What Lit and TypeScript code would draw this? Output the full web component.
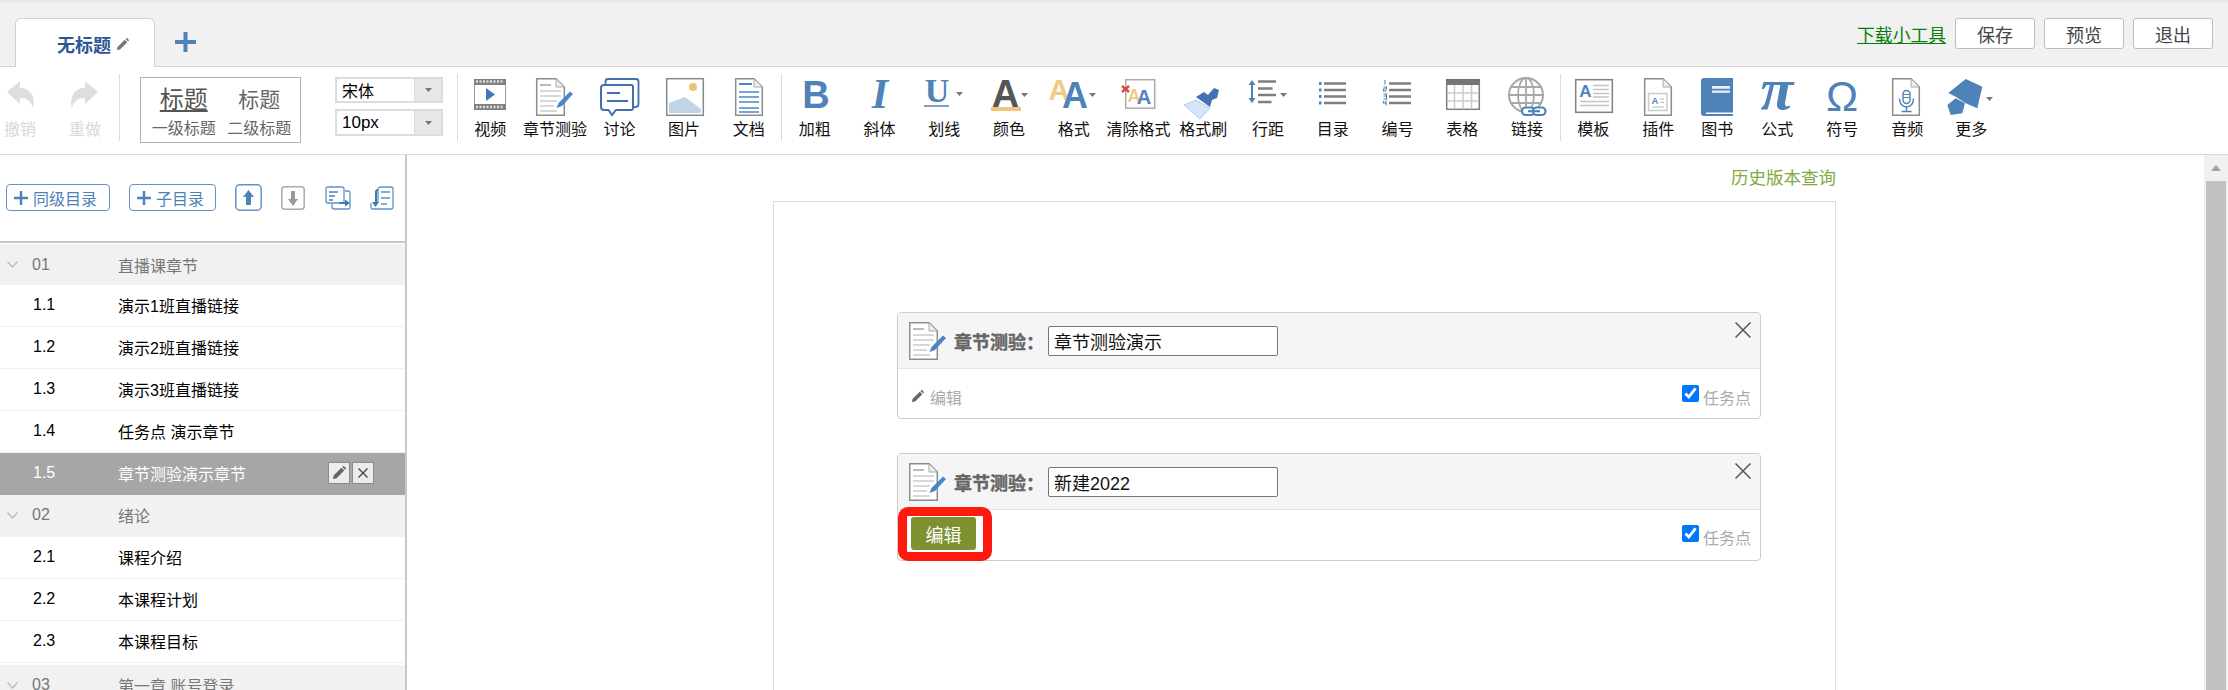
import { LitElement, html, svg, css } from "lit";
import { customElement } from "lit/decorators.js";

const ic = (body: unknown) =>
  html`<svg class="ic" viewBox="0 0 48 40" width="48" height="40">${body}</svg>`;

const caret = (x: number, y: number) =>
  svg`<path d="M${x} ${y}h7l-3.500 4Z" fill="#777"/>`;

const pencil = (w = 14, fill = "#666") =>
  html`<svg viewBox="0 0 14 14" width=${w} height=${w}><path d="M1 13 1.600 9.600 9.400 1.800 12.200 4.600 4.400 12.400ZM10.200 1 11 .3Q11.600-.1 12.200.4L13.600 1.800Q14.100 2.400 13.600 3L13 3.800Z" fill=${fill}/></svg>`;

const quizBody = svg`
  <path d="M5.700 2.700H25L33.300 11V39.300H5.700Z" fill="#fff" stroke="#8c8c8c" stroke-width="1.500"/>
  <path d="M25 3V11H33" fill="#eee" stroke="#aaa" stroke-width="1"/>
  <path d="M9 9H20" stroke="#bbb" stroke-width="2"/>
  <path d="M9 15H30M9 20H30M9 25H26M9 30H23M9 35H26" stroke="#ccc" stroke-width="1.400"/>
  <path d="M39 15.500 42 18 31 30 25.500 32 27.500 27Z" fill="#4a86c5"/>`;

const docBase = (x: number, w: number) => svg`
  <path d="M${x + 0.7} 2.700H${x + w - 9}L${x + w - 0.7} 11V39.300H${x + 0.7}Z" fill="#fff" stroke="#8c8c8c" stroke-width="1.500"/>
  <path d="M${x + w - 9} 3V11H${x + w - 1}" fill="#eee" stroke="#aaa" stroke-width="1"/>`;

const icons: Record<string, unknown> = {
  video: ic(svg`
    <rect x="8" y="3" width="32" height="31" fill="#808080"/>
    <rect x="8.800" y="9" width="30.400" height="19" fill="#fff"/>
    <path d="M10 5.500H12M13.500 5.500H15.500M17 5.500H19M20.500 5.500H22.500M24 5.500H26M27.500 5.500H29.500M31 5.500H33M34.500 5.500H36.500M10 31H12M13.500 31H15.500M17 31H19M20.500 31H22.500M24 31H26M27.500 31H29.500M31 31H33M34.500 31H36.500" stroke="#ddd" stroke-width="2.500"/>
    <path d="M20 12 29 18.500 20 25Z" fill="#3f78b5"/>`),
  quiz: ic(quizBody),
  talk: ic(svg`
    <path d="M10.500 8V5.500Q10.500 3 13 3H41Q43.500 3 43.500 5.500V28Q43.500 31 40.500 31H38.500" fill="none" stroke="#4270ad" stroke-width="1.800"/>
    <path d="M10 9H36Q38 9 38 11V32Q38 34 36 34H21L17 39 13.500 34H9Q6 34 6 31V12Q6 9 9 9Z" fill="#fff" stroke="#4270ad" stroke-width="2"/>
    <path d="M12 17H25M12 25H33" stroke="#4270ad" stroke-width="1.800"/>`),
  image: ic(svg`
    <rect x="6.700" y="2.700" width="36.600" height="36.600" fill="#fff" stroke="#888" stroke-width="1.500"/>
    <circle cx="33" cy="11" r="4" fill="#eac27a"/>
    <path d="M9 37V27L25 21 41 33V37Z" fill="#c0d3e7"/>`),
  doc: ic(svg`${docBase(10, 28)}
    <path d="M14 8H27" stroke="#4a86c5" stroke-width="2"/>
    <path d="M14 16H34M14 21H34M14 26H34M14 32H34M14 36H34" stroke="#4a86c5" stroke-width="1.500"/>`),
  bold: ic(svg`<text class="g sans b" x="25" y="32" font-size="38" text-anchor="middle">B</text>`),
  italic: ic(svg`<text class="g serif bi" x="25" y="32" font-size="42" text-anchor="middle">I</text>`),
  under: ic(svg`<text class="g serif b" x="17" y="26" font-size="34" text-anchor="middle">U</text>
    <path d="M4 30H29" stroke="#4f82b8" stroke-width="1.500"/>${caret(36, 16)}`),
  color: ic(svg`<text class="sans b dark" x="20.500" y="31" font-size="38" text-anchor="middle">A</text>
    <rect x="6" y="31" width="30" height="4" fill="#eec77e"/>${caret(36, 17)}`),
  format: ic(svg`<text class="sans b or" x="9" y="24" font-size="29" text-anchor="middle">A</text>
    <text class="g sans b" x="25" y="32" font-size="36" text-anchor="middle">A</text>${caret(39, 17)}`),
  clear: ic(svg`
    <rect x="11.700" y="3.700" width="29" height="28.500" fill="#fff" stroke="#aaa" stroke-width="1.500"/>
    <text class="sans b or" x="20" y="26" font-size="18" text-anchor="middle">A</text>
    <text class="g sans b" x="30" y="28" font-size="20" text-anchor="middle">A</text>
    <path d="M8 10 15 16M15 10 8 16" stroke="#d94a4a" stroke-width="2.400"/>`),
  brush: ic(svg`
    <path d="M5 29 17 24 31 32 21 43Z" fill="#d5e4f6" stroke="#b5cdea" stroke-width="1"/>
    <path d="M17 21 25 16 29 19 35 12 40 14 38 22 33 24 31 31Z" fill="#4470b4"/>`),
  spacing: ic(svg`
    <path d="M8 6V25" stroke="#4f82b8" stroke-width="2"/>
    <path d="M4.500 9 8 4 11.500 9ZM4.500 22 8 27 11.500 22Z" fill="#4f82b8"/>
    <path d="M14 5.500H32M14 12.500H28.500M14 19H32M14 26H27.500" stroke="#7f7f7f" stroke-width="2.400"/>${caret(36, 17)}`),
  list: ic(svg`<path d="M15 7.500H37M15 14H37M15 20.500H37M15 27H37" stroke="#7f7f7f" stroke-width="2.600"/>
    <path d="M10 6H12.500V9H10ZM10 12.500H12.500V15.500H10ZM10 19H12.500V22H10ZM10 25.500H12.500V28.500H10Z" fill="#4f82b8"/>`),
  number: ic(svg`<path d="M16 7.500H38M16 14H38M16 20.500H38M16 27H38" stroke="#7f7f7f" stroke-width="2.600"/>
    <path d="M12 4V8.500M10.500 11H13.500V13H10.500V15H13.500M10.500 18H13.500V20H10.500M13.500 20V23H10.500M10.500 25V27H13.500M13 24.500V29.500" fill="none" stroke="#4f82b8" stroke-width="1.100"/>`),
  table: ic(svg`
    <rect x="8.700" y="3.700" width="32.600" height="29.600" fill="#fff" stroke="#7f7f7f" stroke-width="1.500"/>
    <rect x="8" y="3" width="34" height="6" fill="#757575"/>
    <path d="M16.500 9V33M25 9V33M33.500 9V33M9 17H41M9 25H41" stroke="#ccc" stroke-width="1.500"/>`),
  link: ic(svg`
    <circle cx="23" cy="19" r="17" fill="none" stroke="#a8a8a8" stroke-width="2"/>
    <ellipse cx="23" cy="19" rx="8" ry="17" fill="none" stroke="#a8a8a8" stroke-width="1.800"/>
    <path d="M23 2V36M7 11H39M6 19H40M7 27H39" stroke="#a8a8a8" stroke-width="1.800"/>
    <rect x="19" y="31.500" width="12.500" height="7.500" rx="3.700" fill="#fff" stroke="#4f82b8" stroke-width="2.200"/>
    <rect x="30" y="31.500" width="12.500" height="7.500" rx="3.700" fill="#fff" stroke="#4f82b8" stroke-width="2.200"/>
    <path d="M25 35.200H37" stroke="#4f82b8" stroke-width="2.200"/>`),
  tpl: ic(svg`
    <rect x="6.700" y="3.700" width="36.600" height="32.600" fill="#fff" stroke="#808080" stroke-width="1.500"/>
    <text class="g sans b" x="16.500" y="21" font-size="17" text-anchor="middle">A</text>
    <path d="M24 9.500H40M24 13.500H40M24 17.500H40M24 21H40M11 25.500H40M11 29.500H40" stroke="#c4c4c4" stroke-width="1.300"/>`),
  plugin: ic(svg`${docBase(10, 28)}
    <rect x="14.500" y="17.500" width="18.500" height="17" fill="none" stroke="#ccc" stroke-width="1.500"/>
    <text class="g sans b" x="21" y="28" font-size="9" text-anchor="middle">A</text>
    <path d="M26 23H30M26 26.500H30M18 31H30" stroke="#bbb" stroke-width="1.100"/>`),
  book: ic(svg`
    <path d="M11 2H40V36.500H13V38H40V40H11Q8 40 8 37V5Q8 2 11 2Z" fill="#4f82b8"/>
    <rect x="19" y="10" width="18" height="2.800" fill="#e8eff7"/>
    <rect x="19" y="14.500" width="18" height="2.300" fill="#e8eff7"/>`),
  pi: ic(svg`<text class="g serif bi" x="24" y="33" font-size="60" text-anchor="middle">π</text>`),
  omega: ic(svg`<text class="g sans" x="24" y="35" font-size="43" text-anchor="middle">Ω</text>`),
  audio: ic(svg`${docBase(9, 28)}
    <rect x="20" y="14.500" width="7" height="13" rx="3.500" fill="#fff" stroke="#4f82b8" stroke-width="1.400"/>
    <path d="M20 18.500H27M20 21.500H27" stroke="#4f82b8" stroke-width="1"/>
    <path d="M16.500 22.500Q17 31 23.500 31T30.500 22.500M23.500 31V35.500M18.500 35.500H28.500" fill="none" stroke="#4f82b8" stroke-width="1.400"/>`),
  more: ic(svg`
    <path d="M1.300 17 18.700 3 35.300 10.700 30.300 32.300 18.700 27.300 8.700 20.700Z" fill="#4f82b8"/>
    <path d="M.3 29 8.700 22.300 18 27.300 15.300 37.300 3.700 39Z" fill="#4f82b8"/>${caret(39, 21)}`),
};

const group1 = [
  { icon: "video", label: "视频" },
  { icon: "quiz", label: "章节测验" },
  { icon: "talk", label: "讨论" },
  { icon: "image", label: "图片" },
  { icon: "doc", label: "文档" },
];
const group2 = [
  { icon: "bold", label: "加粗" },
  { icon: "italic", label: "斜体" },
  { icon: "under", label: "划线" },
  { icon: "color", label: "颜色" },
  { icon: "format", label: "格式" },
  { icon: "clear", label: "清除格式" },
  { icon: "brush", label: "格式刷" },
  { icon: "spacing", label: "行距" },
  { icon: "list", label: "目录" },
  { icon: "number", label: "编号" },
  { icon: "table", label: "表格" },
  { icon: "link", label: "链接" },
];
const group3 = [
  { icon: "tpl", label: "模板", w: 64 },
  { icon: "plugin", label: "插件", w: 66 },
  { icon: "book", label: "图书", w: 52 },
  { icon: "pi", label: "公式", w: 68 },
  { icon: "omega", label: "符号", w: 62 },
  { icon: "audio", label: "音频", w: 68 },
  { icon: "more", label: "更多", w: 60 },
];

type Row = { kind: "group" | "item" | "sel"; num: string; title: string; gap?: boolean };
const rows: Row[] = [
  { kind: "group", num: "01", title: "直播课章节" },
  { kind: "item", num: "1.1", title: "演示1班直播链接" },
  { kind: "item", num: "1.2", title: "演示2班直播链接" },
  { kind: "item", num: "1.3", title: "演示3班直播链接" },
  { kind: "item", num: "1.4", title: "任务点 演示章节" },
  { kind: "sel", num: "1.5", title: "章节测验演示章节" },
  { kind: "group", num: "02", title: "绪论" },
  { kind: "item", num: "2.1", title: "课程介绍" },
  { kind: "item", num: "2.2", title: "本课程计划" },
  { kind: "item", num: "2.3", title: "本课程目标" },
  { kind: "group", num: "03", title: "第一章 账号登录", gap: true },
];

@customElement("app-root")
export class AppRoot extends LitElement {
  static styles = css`
    :host {
      display: block;
      height: 690px;
      overflow: hidden;
      background: #fff;
      font-family: "Liberation Sans", "Noto Sans CJK SC", sans-serif;
      font-size: 16px;
      color: #000;
    }
    .strip { height: 3px; background: #e6e9ed; }
    .tabs {
      display: flex; align-items: flex-start; height: 63px;
      background: #f1f1f1; border-bottom: 1px solid #d4d4d4; box-sizing: content-box;
    }
    .tab {
      display: flex; align-items: center; gap: 5px;
      margin: 15px 0 -1px 15px; width: 140px; height: 49px; box-sizing: border-box;
      padding: 2px 0 0 41px; background: #fff;
      border: 1px solid #d0d0d0; border-bottom: none; border-radius: 6px 6px 0 0;
      color: #2f5597; font-size: 18px; font-weight: 700;
    }
    .plus { margin: 29px 0 0 20px; display: block; }
    .right { margin-left: auto; display: flex; align-items: center; margin-top: 15px; padding-right: 15px; }
    .dl { color: #0a7d0a; font-size: 17.800px; text-decoration: underline; margin-right: 9px; }
    .btn {
      width: 80px; height: 31px; box-sizing: border-box; margin-left: 9px;
      display: flex; align-items: center; justify-content: center;
      background: #fff; border: 1px solid #bdbdbd; border-radius: 3px; font-size: 18px; color: #444;
    }
    .dl + .btn { margin-left: 0; }
    .bar {
      display: flex; align-items: flex-start; height: 87px;
      border-bottom: 1px solid #d8d8d8; box-sizing: content-box; background: #fff;
    }
    .sep { width: 1px; height: 67px; margin-top: 7px; background: #dcdcdc; flex: none; }
    .it { flex: none; width: 64.750px; display: flex; flex-direction: column; align-items: center; padding-top: 9px; }
    .g1 .it { width: 64.600px; }
    .g1, .g2, .g3 { display: flex; }
    .ic { display: block; overflow: visible; }
    .lb { margin-top: 4px; font-size: 16px; line-height: 20px; white-space: nowrap; color: #111; }
    .undo { width: 40px; flex: none; display: flex; flex-direction: column; align-items: center; padding-top: 9px; }
    .undo .lb { color: #d8d8d8; }
    .undo + .undo { margin-left: 25px; }
    .s1 { margin-left: 14px; }
    .heads {
      margin: 10px 0 0 20px; width: 161px; height: 66px; box-sizing: border-box;
      border: 1.500px solid #b4b4b4; display: grid; grid-template-columns: 1fr 1fr;
      justify-items: center; color: #666; padding: 5px 3px 0 5px;
    }
    .h1 { font-size: 24px; line-height: 33px; text-decoration: underline; text-underline-offset: 2px; color: #555; }
    .h2 { font-size: 21px; line-height: 33px; }
    .hs { font-size: 16px; line-height: 22px; white-space: nowrap; }
    .sels { margin: 10px 0 0 34px; display: flex; flex-direction: column; gap: 6px; width: 108px; }
    .sel {
      height: 26px; box-sizing: border-box; border: 2px solid #dcdcdc; display: flex; align-items: center;
      padding-left: 5px; font-size: 16px;
    }
    .sel.px { font-size: 17px; height: 27px; }
    .sel span { flex: 1; }
    .sel i {
      width: 26px; align-self: stretch; background: #e8e8e8; display: flex; align-items: center;
      justify-content: center; border-left: 1px solid #dcdcdc;
    }
    .s2 { margin-left: 14px; }
    .s3 { margin-left: 0.400px; }
    .s4 { margin-left: 1px; }
    .g { fill: #4f82b8; }
    .sans { font-family: "Liberation Sans", sans-serif; }
    .serif { font-family: "Liberation Serif", serif; }
    .b { font-weight: 700; }
    .bi { font-weight: 700; font-style: italic; }
    .dark { fill: #555; }
    .or { fill: #efcb8a; }

    .main { display: flex; height: 535px; }
    .side { width: 407px; flex: none; box-sizing: border-box; border-right: 2px solid #c8c8c8; overflow: hidden; }
    .tools {
      box-sizing: content-box; border-bottom: 2px solid #c8c8c8; margin-bottom: 1px;
      display: flex; align-items: flex-start; padding: 29px 0 0 6px; height: 57px;
    }
    .add {
      height: 27px; box-sizing: border-box; border: 1.500px solid #5f93c9; border-radius: 4px;
      display: flex; align-items: center; gap: 5px; padding-left: 7px; color: #4f82b8; font-size: 16px;
    }
    .a1 { width: 104px; }
    .a2 { width: 87px; margin-left: 19px; }
    .tools svg { display: block; flex: none; }
    .t1 { margin-left: 19px; }
    .t2 { margin: 2px 0 0 19px; }
    .t3 { margin: 2px 0 0 20px; }
    .t4 { margin: 2px 0 0 19px; }
    .row {
      height: 42px; box-sizing: border-box; display: flex; align-items: center;
      border-bottom: 1px solid #f0f0f0; padding-bottom: 2px;
    }
    .row .no { width: 118px; padding-left: 33px; flex: none; box-sizing: border-box; }
    .row.group { background: #f1f1f1; color: #777; border-bottom: none; }
    .row.first { height: 41px; padding-bottom: 0; }
    .row.group .no { padding-left: 7px; display: flex; align-items: center; gap: 14px; }
    .row.gap { margin-top: 2px; }
    .row.sel-row { background: #a6a6a6; color: #fff; border-bottom: none; }
    .ops { margin-left: auto; margin-right: 31px; display: flex; gap: 2px; }
    .op {
      width: 22px; height: 22px; box-sizing: border-box; background: #ececec; border: 1px solid #8a8a8a;
      display: flex; align-items: center; justify-content: center;
    }
    .content { flex: 1; min-width: 0; padding-left: 366px; overflow: hidden; }
    .hist { width: 1063px; text-align: right; color: #82a83f; font-size: 17.500px; line-height: 24px; height: 46px; padding-top: 11px; box-sizing: border-box; }
    .sheet {
      width: 1063px; height: 600px; box-sizing: border-box; border: 1px solid #dedede;
      padding: 110px 74px 0 123px;
    }
    .card {
      position: relative; border: 1px solid #ccc; border-radius: 4px; box-sizing: border-box;
      margin-bottom: 34px;
    }
    .head {
      display: flex; align-items: center; background: #f5f5f5; border-bottom: 1px solid #e6e6e6;
      padding-left: 11px; border-radius: 3px 3px 0 0; height: 56px; box-sizing: border-box;
    }
    .head .name {
      margin-left: 8px; font-size: 18px; font-weight: 700; color: #666; width: 94px; white-space: nowrap;
      -webkit-text-stroke: 0.400px #666;
    }
    .head input {
      width: 230px; height: 30px; box-sizing: border-box; border: 1px solid #767676; border-radius: 2px;
      padding: 0 5px; font: inherit; font-size: 18px; color: #111; background: #fff;
    }
    .x { margin: 0 9px 22px auto; display: block; }
    .foot {
      display: flex; align-items: center; height: 49px; box-sizing: border-box;
      padding: 6px 9px 0 13px; color: #aaa;
    }
    .foot.tall { height: 50px; padding-top: 4px; }
    .edit { display: flex; align-items: center; gap: 6px; }
    .task { margin-left: auto; display: flex; align-items: center; gap: 4px; }
    .task input { width: 17px; height: 17px; margin: 0 0 7px; }
    .go {
      width: 65px; height: 33px; margin-bottom: 7px; background: #7d9131; border-radius: 3px; color: #fff; font-size: 18px;
      display: flex; align-items: center; justify-content: center;
    }
    .mark {
      position: absolute; left: 0; bottom: -1px; width: 94px; height: 54px; box-sizing: border-box;
      border: 9px solid #ff1a0f; border-radius: 10px; pointer-events: none;
    }
    .scroll { width: 24px; flex: none; background: #f1f1f1; display: flex; flex-direction: column; align-items: center; }
    .scroll svg { margin-top: 10px; display: block; }
    .thumb { margin-top: 10px; width: 20px; flex: 1; background: #c1c1c1; }
  `;

  private item(x: { icon: string; label: string; w?: number }) {
    return html`<div class="it" style=${x.w ? `width:${x.w}px` : ""}>${icons[x.icon]}<div class="lb">${x.label}</div></div>`;
  }

  private card(value: string, second: boolean) {
    return html`<div class="card">
      <div class="head">
        <svg viewBox="5 2 37 38" width="37" height="38">${quizBody}</svg>
        <span class="name">章节测验：</span>
        <input type="text" .value=${value} />
        <svg class="x" viewBox="0 0 16 16" width="16" height="16"><path d="M.5.5 15.500 15.500M15.500.5.5 15.500" stroke="#555" stroke-width="1.500"/></svg>
      </div>
      <div class="foot ${second ? "tall" : ""}">
        ${second
          ? html`<div class="go">编辑</div>`
          : html`<div class="edit">${pencil(13)}<span>编辑</span></div>`}
        <label class="task"><input type="checkbox" checked /><span>任务点</span></label>
      </div>
      ${second ? html`<div class="mark"></div>` : ""}
    </div>`;
  }

  render() {
    return html`
      <div class="strip"></div>
      <div class="tabs">
        <div class="tab"><span>无标题</span>${pencil(13, "#777")}</div>
        <svg class="plus" viewBox="0 0 21 20" width="21" height="20"><path d="M0 10H21M10.500 0V20" stroke="#4f82b8" stroke-width="4"/></svg>
        <div class="right">
          <span class="dl">下载小工具</span>
          <div class="btn">保存</div><div class="btn">预览</div><div class="btn">退出</div>
        </div>
      </div>
      <div class="bar">
        <div class="undo">
          <svg class="ic" viewBox="0 0 40 40" width="40" height="40"><path d="M7 16 20 5V12C30 12 36 20 33 32 31 25 27 22 20 22V28Z" fill="#dedede"/></svg>
          <div class="lb">撤销</div>
        </div>
        <div class="undo">
          <svg class="ic" viewBox="0 0 40 40" width="40" height="40"><path d="M33 16 20 5V12C10 12 4 20 7 32 9 25 13 22 20 22V28Z" fill="#dedede"/></svg>
          <div class="lb">重做</div>
        </div>
        <div class="sep s1"></div>
        <div class="heads">
          <span class="h1">标题</span><span class="h2">标题</span>
          <span class="hs">一级标题</span><span class="hs">二级标题</span>
        </div>
        <div class="sels">
          <div class="sel"><span>宋体</span><i><svg viewBox="0 0 7 4" width="7" height="4"><path d="M0 0H7L3.500 4Z" fill="#777"/></svg></i></div>
          <div class="sel px"><span>10px</span><i><svg viewBox="0 0 7 4" width="7" height="4"><path d="M0 0H7L3.500 4Z" fill="#777"/></svg></i></div>
        </div>
        <div class="sep s2"></div>
        <div class="g1">${group1.map((x) => this.item(x))}</div>
        <div class="sep s3"></div>
        <div class="g2">${group2.map((x) => this.item(x))}</div>
        <div class="sep s4"></div>
        <div class="g3">${group3.map((x) => this.item(x))}</div>
      </div>
      <div class="main">
        <div class="side">
          <div class="tools">
            <div class="add a1"><svg viewBox="0 0 14 14" width="14" height="14"><path d="M0 7H14M7 0V14" stroke="#4f82b8" stroke-width="2.500"/></svg>同级目录</div>
            <div class="add a2"><svg viewBox="0 0 14 14" width="14" height="14"><path d="M0 7H14M7 0V14" stroke="#4f82b8" stroke-width="2.500"/></svg>子目录</div>
            <svg class="t1" viewBox="0 0 27 27" width="27" height="27"><rect x=".8" y=".8" width="25.400" height="25.400" rx="4" fill="none" stroke="#5f93c9" stroke-width="1.500"/><path d="M13.500 6 19 13H16V21H11V13H8Z" fill="#4f82b8"/></svg>
            <svg class="t2" viewBox="0 0 24 24" width="24" height="24"><rect x=".8" y=".8" width="22.400" height="22.400" rx="3" fill="none" stroke="#aaa" stroke-width="1.500"/><path d="M12 20 7 13H10V5H14V13H17Z" fill="#999"/></svg>
            <svg class="t3" viewBox="0 0 26 24" width="26" height="24"><path d="M17 1H3Q1 1 1 3V15Q1 17 3 17H17Q19 17 19 15V3Q19 1 17 1Z" fill="none" stroke="#5f93c9" stroke-width="1.300"/><path d="M20 5H23Q25 5 25 7V21Q25 23 23 23H9Q7 23 7 21V18" fill="none" stroke="#5f93c9" stroke-width="1.300"/><path d="M4 6H13M4 10H10M4 14H8" stroke="#4f82b8" stroke-width="1.300"/><path d="M14 16H20V13.500L25 17 20 20.500V18H14Z" fill="#3f78b5"/></svg>
            <svg class="t4" viewBox="0 0 24 24" width="24" height="24"><path d="M8 16V4Q8 1 11 1H21Q23 1 23 3V21Q23 23 21 23H3Q1 23 1 21V17" fill="none" stroke="#5f93c9" stroke-width="1.300"/><path d="M11 6H20M11 12H20M11 18H17" stroke="#5f93c9" stroke-width="1.300"/><path d="M5 6Q5 3 8 3V5Q7 5 7 6V16H9L5.500 21 2 16H5Z" fill="#3f78b5"/></svg>
          </div>
          ${rows.map((r, i) => {
            const cls = r.kind === "group" ? "group" : r.kind === "sel" ? "sel-row" : "";
            return html`<div class="row ${cls} ${r.gap ? "gap" : ""} ${i === 0 ? "first" : ""}">
              <div class="no">
                ${r.kind === "group"
                  ? html`<svg viewBox="0 0 11 7" width="11" height="7"><path d="M.5.5 5.500 6 10.500.5" fill="none" stroke="#bbb" stroke-width="1.300"/></svg>`
                  : ""}
                <span>${r.num}</span>
              </div>
              <span>${r.title}</span>
              ${r.kind === "sel"
                ? html`<div class="ops">
                    <div class="op">${pencil(14, "#666")}</div>
                    <div class="op"><svg viewBox="0 0 10 10" width="10" height="10"><path d="M.5.5 9.500 9.500M9.500.5.5 9.500" stroke="#444" stroke-width="1.300"/></svg></div>
                  </div>`
                : ""}
            </div>`;
          })}
        </div>
        <div class="content">
          <div class="hist">历史版本查询</div>
          <div class="sheet">
            ${this.card("章节测验演示", false)}
            ${this.card("新建2022", true)}
          </div>
        </div>
        <div class="scroll">
          <svg viewBox="0 0 10 6" width="10" height="6"><path d="M0 6 5 0 10 6Z" fill="#a3a3a3"/></svg>
          <div class="thumb"></div>
        </div>
      </div>
    `;
  }
}
